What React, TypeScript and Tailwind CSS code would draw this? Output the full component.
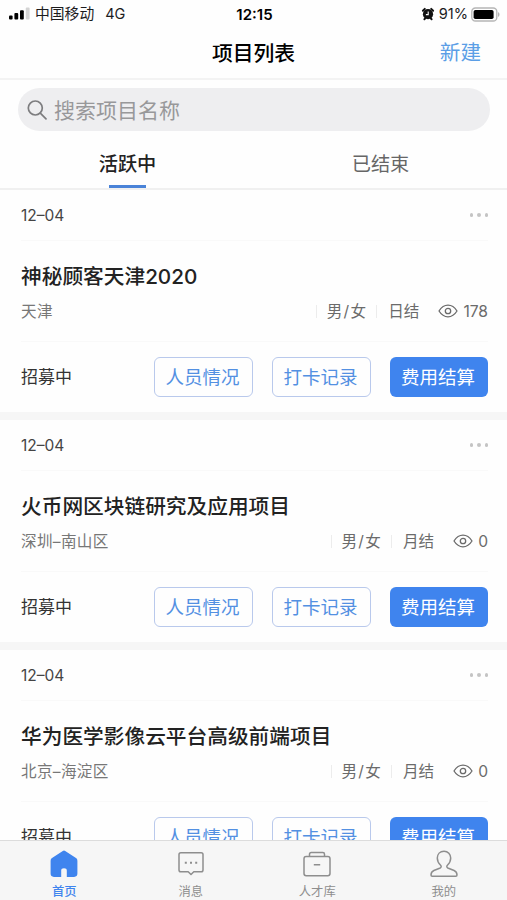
import React, { useState } from 'react';

interface Project {
  id: number;
  date: string;
  title: string;
  location: string;
  gender: string;
  settlement: string;
  views: number;
  status: string;
}

const projects: Project[] = [
  {
    id: 1,
    date: '12–04',
    title: '神秘顾客天津2020',
    location: '天津',
    gender: '男/女',
    settlement: '日结',
    views: 178,
    status: '招募中',
  },
  {
    id: 2,
    date: '12–04',
    title: '火币网区块链研究及应用项目',
    location: '深圳–南山区',
    gender: '男/女',
    settlement: '月结',
    views: 0,
    status: '招募中',
  },
  {
    id: 3,
    date: '12–04',
    title: '华为医学影像云平台高级前端项目',
    location: '北京–海淀区',
    gender: '男/女',
    settlement: '月结',
    views: 0,
    status: '招募中',
  },
];

const StatusBar: React.FC = () => (
  <div className="grid h-[27px] grid-cols-3 items-center pt-px pr-[7px] pl-[9px] text-[14.8px] leading-none text-[#1c1c1e]">
    <div className="flex items-center">
      <svg className="h-[13px] w-[21px]" viewBox="0 0 21 13">
        <rect x="0" y="8.5" width="3.6" height="4" rx="1" fill="#000" />
        <rect x="5.4" y="6" width="3.8" height="6.5" rx="1" fill="#000" />
        <rect x="11" y="3.2" width="3.8" height="9.3" rx="1" fill="#000" />
        <rect x="16.8" y="0.4" width="3.8" height="12.1" rx="1" fill="#d4d4d4" />
      </svg>
      <span className="ml-[5px]">中国移动</span>
      <span className="ml-[11px] text-[14.5px]">4G</span>
    </div>
    <div className="text-center text-[15px] font-semibold text-black">12:15</div>
    <div className="flex items-center justify-end">
      <svg className="h-[14px] w-[14px]" viewBox="0 0 14 14">
        <circle cx="7" cy="7.2" r="5.1" fill="#111" />
        <path d="M1.900 3.800 3.800 1.900M12.100 3.800 10.200 1.900M3.400 12.200l.8-.8M10.600 12.200l-.8-.8" stroke="#111" strokeWidth="2" strokeLinecap="round" />
        <path d="M7.200 4.600v3H4.900" fill="none" stroke="#fff" strokeWidth="1.100" />
      </svg>
      <span className="ml-[4px] text-[14.6px]">91%</span>
      <svg className="ml-[3px] h-[15px] w-[29px]" viewBox="0 0 29 15">
        <rect x="0.8" y="1" width="25" height="13" rx="3.600" fill="none" stroke="#b5b5b5" strokeWidth="1.300" />
        <rect x="2.600" y="2.900" width="20" height="9.200" rx="1.800" fill="#000" />
        <path d="M27.200 5.200c1.600.5 1.600 4.100 0 4.600z" fill="#a5a5a5" />
      </svg>
    </div>
  </div>
);

const EyeIcon: React.FC = () => (
  <svg className="h-[14px] w-5" viewBox="0 0 20 14" fill="none" stroke="#6b6b6b" strokeWidth="1.300">
    <path d="M1 7C3.400 3.200 6.400 1.200 10 1.200S16.600 3.200 19 7c-2.400 3.800-5.400 5.800-9 5.800S3.400 10.800 1 7z" strokeLinejoin="round" />
    <circle cx="10" cy="7" r="2.700" />
  </svg>
);

const ProjectCard: React.FC<{ project: Project }> = ({ project }) => (
  <section className="h-[222px] shrink-0 bg-[#fefefe] pr-[19px] pl-[21px]">
    <div className="flex h-[50px] items-center justify-between">
      <span className="pt-[2px] text-[15.5px] text-[#444]">{project.date}</span>
      <button className="flex gap-1">
        <span className="size-[3.5px] rounded-full bg-[#c4c4c4]"></span>
        <span className="size-[3.5px] rounded-full bg-[#c4c4c4]"></span>
        <span className="size-[3.5px] rounded-full bg-[#c4c4c4]"></span>
      </button>
    </div>
    <div className="h-[102px] border-y border-[#f9f9f9] pt-[21px]">
      <h2 className="text-[20.7px] leading-[30px] font-medium whitespace-nowrap text-[#222]">{project.title}</h2>
      <div className="mt-[7px] flex h-[24px] items-center text-[15.6px] whitespace-nowrap text-[#6b6b6b]">
        <span className="flex-1 pt-[2px] tracking-[0.3px] text-[#777]">{project.location}</span>
        <span className="h-[13px] w-px bg-[#ececec]"></span>
        <span className="mr-[9px] ml-[10px] pt-[2px] tracking-[1.2px]">{project.gender}</span>
        <span className="h-[13px] w-px bg-[#ececec]"></span>
        <span className="mr-[19px] ml-[11px] pt-[2px]">{project.settlement}</span>
        <EyeIcon />
        <span className="ml-[5px] pt-px">{project.views}</span>
      </div>
    </div>
    <div className="flex h-[70px] items-center">
      <span className="flex-1 pt-[2px] text-[17px] text-[#333]">{project.status}</span>
      <div className="flex gap-[19px] text-[18.5px]">
        <button className="h-10 w-[99px] rounded-md border border-[#b9c9ec] pt-[2px] pr-[2px] text-[#5390e2]">人员情况</button>
        <button className="h-10 w-[99px] rounded-md border border-[#b9c9ec] pt-[2px] pr-[2px] text-[#5390e2]">打卡记录</button>
        <button className="h-10 w-[98px] rounded-md bg-[#3f84ee] pt-[2px] pr-[2px] text-white">费用结算</button>
      </div>
    </div>
  </section>
);

const HomeIcon = () => (
  <svg className="h-7 w-7" viewBox="0 0 28 28">
    <path d="M12.800.9 2 8.100Q.6 9 .6 10.700V23.600q0 3.300 3.300 3.300h7.300v-6.300q0-2.400 2.800-2.400t2.800 2.400v6.300h7.300q3.300 0 3.300-3.300V10.700q0-1.700-1.400-2.600L15.200.9Q14 .1 12.800.9z" fill="#3f84ee" />
  </svg>
);

const MessageIcon = () => (
  <svg className="h-7 w-7" viewBox="0 0 28 28" fill="none" stroke="#8e8e8e" strokeWidth="1.500" strokeLinejoin="round">
    <path d="M3.800 2.700h20.400q1.800 0 1.800 1.800v15.400q0 1.800-1.800 1.800h-7.400L14 24.500l-2.800-2.800H3.800Q2 21.700 2 19.900V4.500q0-1.800 1.800-1.800z" />
    <path d="M7.800 12.700h2M13 12.700h2M18.200 12.700h2" strokeWidth="2" />
  </svg>
);

const TalentIcon = () => (
  <svg className="h-7 w-7" viewBox="0 0 28 28" fill="none" stroke="#8e8e8e" strokeWidth="1.500">
    <rect x="1" y="6.500" width="26" height="19.300" rx="2.200" />
    <path d="M6.500 6.500V4.200q0-1.700 1.700-1.700h11.600q1.700 0 1.700 1.700v2.300M10.800 14.700h6.400" />
  </svg>
);

const ProfileIcon = () => (
  <svg className="h-7 w-7" viewBox="0 0 28 28" fill="none" stroke="#8e8e8e" strokeWidth="1.500" strokeLinejoin="round">
    <path d="M14 1.200c-4 0-6.700 2.900-6.700 6.900 0 3 1.200 5.300 3.300 7.200.9.900.8 2.100-.4 2.700l-6.300 2.500C1.800 21.500 1 23.300 1 25q0 1.200 1.200 1.200h23.600q1.200 0 1.200-1.200c0-1.700-.8-3.500-2.900-4.500L17.800 18c-1.200-.6-1.300-1.800-.4-2.700 2.100-1.900 3.300-4.200 3.300-7.200 0-4-2.700-6.900-6.700-6.900z" />
  </svg>
);

const navItems = [
  { label: '首页', icon: HomeIcon },
  { label: '消息', icon: MessageIcon },
  { label: '人才库', icon: TalentIcon },
  { label: '我的', icon: ProfileIcon },
];

const App: React.FC = () => {
  const [tab, setTab] = useState('活跃中');

  return (
    <div className="flex h-[900px] w-full flex-col overflow-hidden bg-[#fefefe] font-['Inter','Noto_Sans_CJK_SC',sans-serif]">
      <StatusBar />

      <header className="grid h-[53px] shrink-0 grid-cols-3 items-center border-b-2 border-[#f3f3f3] px-[26px] pt-[2px]">
        <h1 className="col-start-2 text-center text-[20.8px] font-medium text-black">项目列表</h1>
        <button className="justify-self-end text-[20.6px] text-[#5b9ee6]">新建</button>
      </header>

      <div className="shrink-0 pt-2 pr-[17px] pl-[18px]">
        <div className="flex h-[43px] items-center rounded-full bg-[#eeeef0] pl-[9px]">
          <svg className="h-5 w-5" viewBox="0 0 20 20" fill="none" stroke="#7d7d7f" strokeWidth="1.700" strokeLinecap="round">
            <circle cx="8.300" cy="8" r="7" />
            <path d="M13.300 13.200 19 18.800" />
          </svg>
          <span className="ml-[7px] pt-[2px] text-[21px] text-[#98989a]">搜索项目名称</span>
        </div>
      </div>

      <div className="flex h-[59px] shrink-0 border-b-2 border-[#f0f0f0] pl-px">
        {['活跃中', '已结束'].map((name) => (
          <button
            key={name}
            onClick={() => setTab(name)}
            className={`flex flex-1 flex-col items-center pt-[19px] text-[19.2px] leading-[28px]
              ${tab === name ? 'font-medium text-[#222]' : 'text-[#666]'}
            `}
          >
            {name}
            {tab === name && <span className="mt-[7px] h-1 w-[37px] bg-[#4a83d8]"></span>}
          </button>
        ))}
      </div>

      <main className="flex min-h-0 flex-1 flex-col gap-2 overflow-hidden bg-[#f6f6f6]">
        {projects.map((project) => (
          <ProjectCard key={project.id} project={project} />
        ))}
      </main>

      <nav className="grid h-[60px] shrink-0 grid-cols-4 border-t border-[#dcdcdc] bg-[#f6f6f6] pl-px">
        {navItems.map((item, index) => (
          <button
            key={item.label}
            className={`flex flex-col items-center pt-[9px] text-[12.3px] leading-[18px] ${index === 0 ? 'font-medium text-[#3f84ee]' : 'text-[#8e8e8e]'}`}
          >
            <item.icon />
            <span className="mt-[5px]">{item.label}</span>
          </button>
        ))}
      </nav>
    </div>
  );
};

export default App;
